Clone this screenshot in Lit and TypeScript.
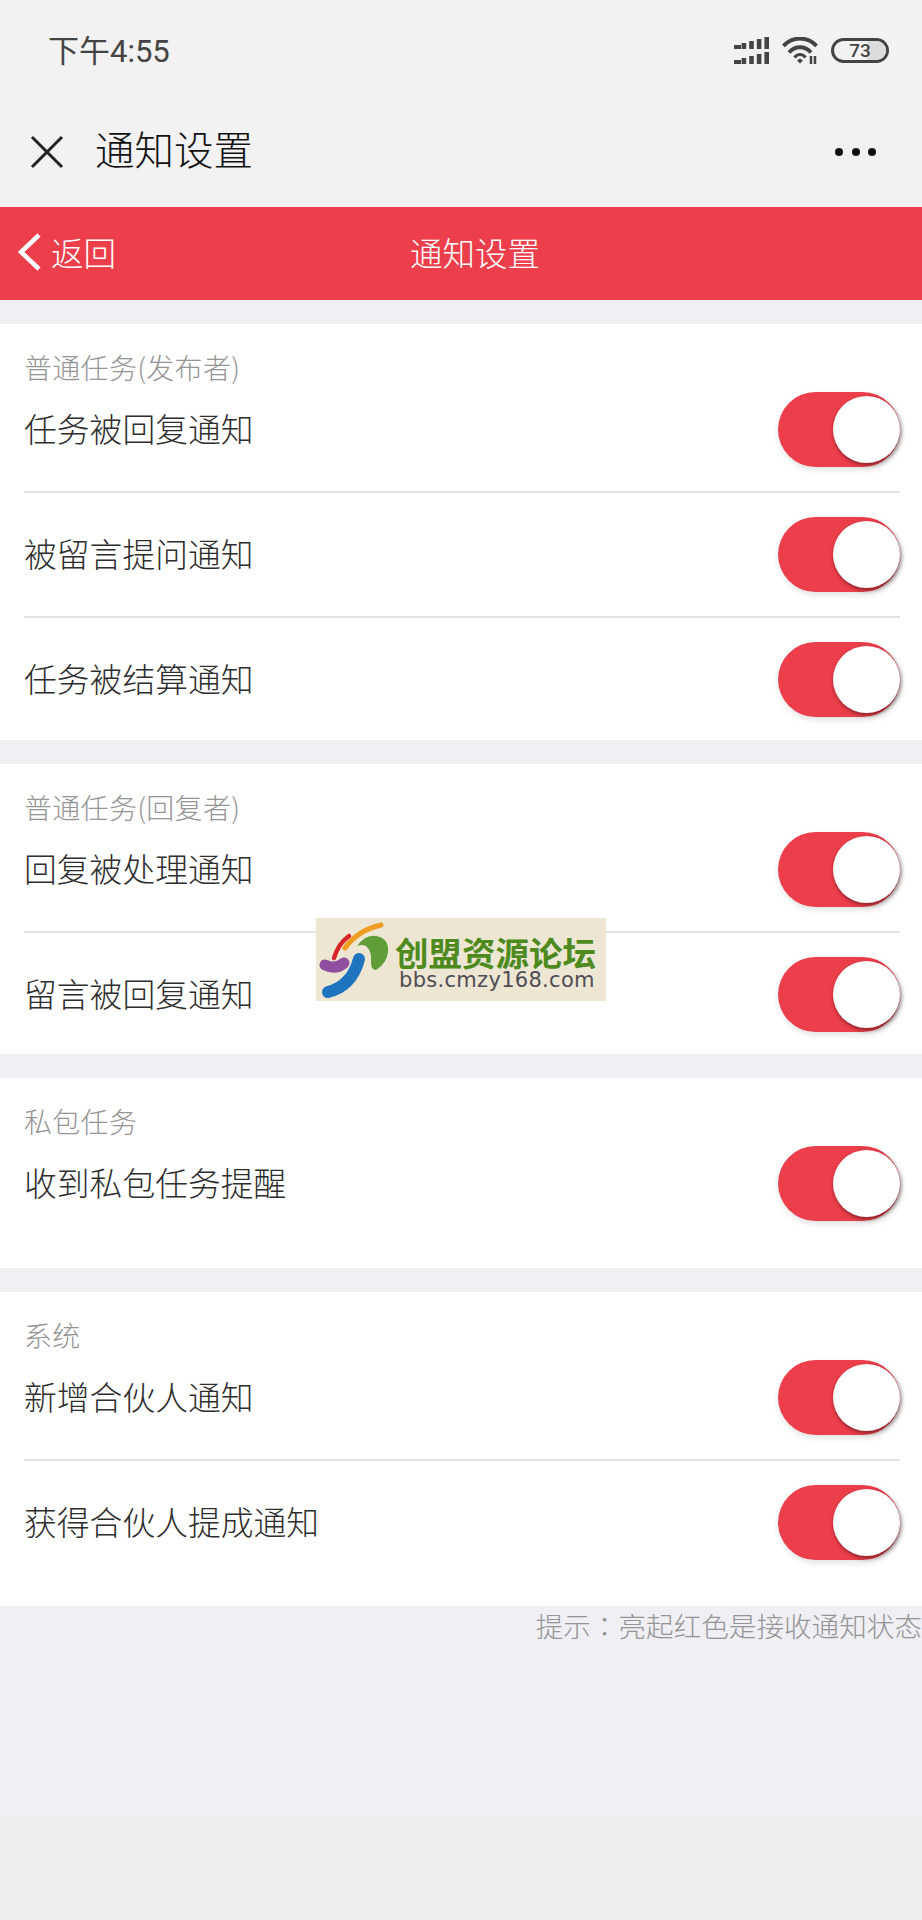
import { LitElement, html, css, svg } from 'lit'
import { customElement } from 'lit/decorators.js'

interface Section {
    title: string
    items: string[]
    tall?: boolean
}

const SECTIONS: Section[] = [
    { title: '普通任务(发布者)', items: ['任务被回复通知', '被留言提问通知', '任务被结算通知'] },
    { title: '普通任务(回复者)', items: ['回复被处理通知', '留言被回复通知'] },
    { title: '私包任务', items: ['收到私包任务提醒'], tall: true },
    { title: '系统', items: ['新增合伙人通知', '获得合伙人提成通知'], tall: true }
]

const BAR_HEIGHTS = [4, 6, 8, 10, 12]

@customElement('app-root')
export class AppRoot extends LitElement {
    static styles = css`
        :host {
            display: block;
            position: relative;
            width: 922px;
            min-height: 1920px;
            background: linear-gradient(#efeff4 1817px, #ededed 1817px);
            font-family: 'Noto Sans CJK SC', 'Noto Sans', sans-serif;
            font-weight: 300;
            color: #333;
            overflow: hidden;
        }

        .chrome {
            background: #f2f2f2;
        }

        .status {
            height: 102px;
            display: flex;
            align-items: center;
            justify-content: space-between;
            padding: 0 33px 2px 48px;
            box-sizing: border-box;
        }

        .time {
            font-size: 31px;
            color: #444;
            font-family: 'Roboto', 'Noto Sans CJK SC', sans-serif;
            font-weight: 400;
            margin-bottom: 4px;
        }

        .status-icons {
            display: flex;
            align-items: center;
            gap: 13px;
        }

        .signal {
            display: flex;
            flex-direction: column;
            gap: 3px;
        }

        .signal svg,
        .wifi,
        .close,
        .chevron {
            display: block;
        }

        .battery {
            position: relative;
            width: 58px;
            height: 25px;
            box-sizing: border-box;
            border: 3px solid #444;
            border-radius: 13px;
            overflow: hidden;
            display: flex;
            align-items: center;
            justify-content: center;
            font-family: 'Roboto', sans-serif;
            font-size: 19px;
            font-weight: 500;
            color: #444;
        }

        .battery .rest {
            position: absolute;
            top: 0;
            bottom: 0;
            right: 0;
            width: 36%;
            background: #dcdcdc;
        }

        .battery span {
            position: relative;
        }

        .nav {
            height: 105px;
            display: flex;
            align-items: center;
            padding: 0 46px 6px 30px;
            box-sizing: border-box;
        }

        .nav-title {
            margin: 0 0 7px 31px;
            font-size: 39.5px;
            color: #111;
            flex: 1;
            line-height: 48px;
        }

        .dots {
            display: flex;
            gap: 8.5px;
        }

        .dots i {
            width: 8px;
            height: 8px;
            border-radius: 50%;
            background: #111;
        }

        .bar {
            height: 93px;
            background: #ec3f4b;
            color: #fff;
            display: grid;
            grid-template-columns: 1fr auto 1fr;
            align-items: center;
            font-size: 32.5px;
            padding-bottom: 4px;
            box-sizing: border-box;
        }

        .back {
            display: flex;
            align-items: center;
            gap: 9px;
            padding-left: 16px;
        }

        .bar-title {
            padding-left: 28px;
        }

        .section {
            margin-top: 24px;
            background: #fff;
            padding: 25px 22px 22.5px 24px;
        }

        .section.tall {
            padding-bottom: 46.5px;
        }

        .section-title {
            height: 38px;
            line-height: 36px;
            font-size: 28px;
            letter-spacing: 0.3px;
            color: #959595;
        }

        .row {
            display: flex;
            align-items: center;
            justify-content: space-between;
            padding: 24px 0;
            border-top: 2px solid #e3e3e3;
            font-size: 32.8px;
            color: #2e2e2e;
        }

        .row span {
            padding-bottom: 4px;
        }

        .row.first {
            border-top: 0;
            padding: 5px 0 24px;
        }

        .row.last {
            padding-bottom: 0;
        }

        .switch {
            position: relative;
            width: 122px;
            height: 75px;
            border-radius: 38px;
            background: #ec3f4b;
            box-shadow: 1px 3px 6px rgba(0, 0, 0, 0.12);
        }

        .knob {
            position: absolute;
            top: 4px;
            right: 0;
            width: 67px;
            height: 67px;
            border-radius: 50%;
            background: #fff;
            box-shadow: 1px 2px 4px rgba(40, 0, 0, 0.55);
        }

        .hint {
            text-align: right;
            font-size: 27.6px;
            line-height: 38px;
            color: #959595;
            white-space: nowrap;
        }

        .hint b {
            font-family: 'Noto Sans CJK TC', sans-serif;
            font-weight: 300;
        }

        .logo {
            position: absolute;
            left: 316px;
            top: 918px;
            width: 290px;
            height: 83px;
            background: #ece6d3;
        }

        .logo svg {
            position: absolute;
            left: 0;
            top: 0;
        }

        .logo-name {
            position: absolute;
            left: 79px;
            top: 19px;
            font-size: 33.5px;
            line-height: 30px;
            font-weight: 700;
            color: #4f8a1f;
            white-space: nowrap;
        }

        .logo-url {
            position: absolute;
            left: 83px;
            top: 50px;
            font-family: 'DejaVu Sans', sans-serif;
            font-size: 21px;
            line-height: 24px;
            font-weight: 400;
            letter-spacing: 0.3px;
            color: #504d55;
            white-space: nowrap;
        }
    `

    renderBars() {
        return html`<svg width="35" height="12" viewBox="0 0 35 12">
            ${BAR_HEIGHTS.map(
                (h, i) => svg`<rect x=${i * 7.6} y=${12 - h} width=${i === 0 ? 7 : 4.6} height=${h} fill="#444"></rect>`
            )}
        </svg>`
    }

    renderStatus() {
        return html`<div class="status">
            <div class="time">下午4:55</div>
            <div class="status-icons">
                <div class="signal">${this.renderBars()}${this.renderBars()}</div>
                <svg class="wifi" width="36" height="27" viewBox="0 0 36 27" fill="none" stroke="#444" stroke-width="3.8">
                    <path d="M1.500 9C10 -1 26 -1 34.500 9"></path>
                    <path d="M7 15.500C13 8.500 23 8.500 29 15.500"></path>
                    <path d="M12.500 20.500C15.500 16.500 20.500 16.500 23.500 20.500" stroke-width="3"></path>
                    <path d="M15 23.500L18 21.500L21 23.500L18 26.500Z" fill="#444" stroke="none"></path>
                    <path d="M29 19V27M33 19V27" stroke-width="2.500"></path>
                </svg>
                <div class="battery">
                    <div class="rest"></div>
                    <span>73</span>
                </div>
            </div>
        </div>`
    }

    renderNav() {
        return html`<div class="nav">
            <svg class="close" width="34" height="34" viewBox="0 0 34 34" fill="none" stroke="#222" stroke-width="3">
                <path d="M2 2L32 32M32 2L2 32"></path>
            </svg>
            <div class="nav-title">通知设置</div>
            <div class="dots"><i></i><i></i><i></i></div>
        </div>`
    }

    renderBar() {
        return html`<div class="bar">
            <div class="back">
                <svg class="chevron" width="26" height="40" viewBox="0 0 26 40" fill="none" stroke="#fff" stroke-width="4.500">
                    <path d="M23 3L5 20L23 37"></path>
                </svg>
                <span>返回</span>
            </div>
            <div class="bar-title">通知设置</div>
            <div></div>
        </div>`
    }

    renderSection(section: Section) {
        return html`<div class="section ${section.tall ? 'tall' : ''}">
            <div class="section-title">${section.title}</div>
            ${section.items.map(
                (item, i) => html`<div class="row ${i === 0 ? 'first' : ''} ${i === section.items.length - 1 ? 'last' : ''}">
                    <span>${item}</span>
                    <div class="switch"><div class="knob"></div></div>
                </div>`
            )}
        </div>`
    }

    renderLogo() {
        return html`<div class="logo">
            <svg width="80" height="83" viewBox="0 0 80 83" fill="none" stroke-linecap="round">
                <path d="M29 30Q42 12 65 7" stroke="#ee9d22" stroke-width="5"></path>
                <path d="M18 40Q22 26 33 18" stroke="#d8252a" stroke-width="4.500"></path>
                <path d="M41 28Q50 16 60 18Q73 20 72 34Q71 45 60 52Q55 52 55 44Q56 33 50 28Q46 26 41 28Z" fill="#5f9e38"></path>
                <path d="M9 47Q20 52 28 45" stroke="#8f4f9e" stroke-width="11"></path>
                <path d="M12 74Q36 68 43 41" stroke="#1f74c0" stroke-width="12"></path>
            </svg>
            <div class="logo-name">创盟资源论坛</div>
            <div class="logo-url">bbs.cmzy168.com</div>
        </div>`
    }

    render() {
        return html`
            <div class="chrome">${this.renderStatus()}${this.renderNav()}</div>
            ${this.renderBar()}
            ${SECTIONS.map(s => this.renderSection(s))}
            <div class="hint">提示<b>：</b>亮起红色是接收通知状态</div>
            ${this.renderLogo()}
        `
    }
}
